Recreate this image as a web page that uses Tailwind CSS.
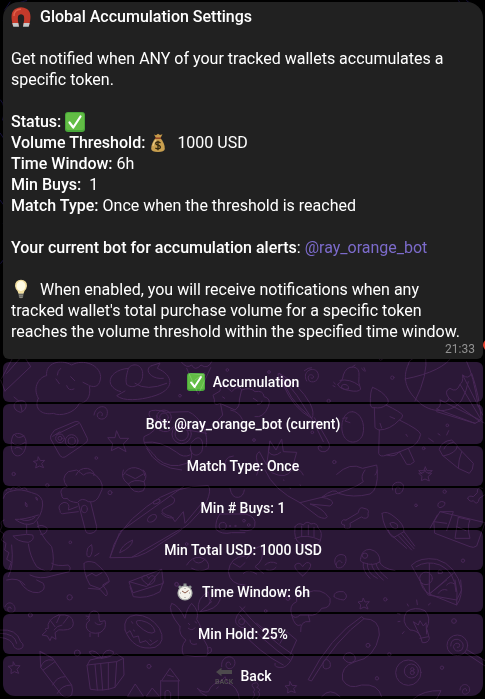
<!DOCTYPE html>
<html lang="en">
<head>
  <meta charset="UTF-8" />
  <meta name="viewport" content="width=device-width, initial-scale=1.0"/>
  <title>Global Accumulation Settings</title>
  <script src="https://cdn.jsdelivr.net/npm/@tailwindcss/browser@4"></script>
</head>
<body class="bg-black font-['Roboto',sans-serif] text-white">
<div class="relative min-h-screen overflow-hidden bg-black pt-[2px] pr-[2px] pb-[3px] pl-[3px]">

  <!-- Chat wallpaper -->
  <svg class="absolute inset-0 h-full w-full" viewBox="0 0 1455 2097" preserveAspectRatio="xMidYMin slice" fill="none" stroke="#1d0f20" stroke-width="3" stroke-linecap="round" stroke-linejoin="round" aria-hidden="true">
    <g stroke="#15103a">
      <path d="M10 60C20 25 45 8 80 2M14 30L30 6M1375 2q25 20 40 45M1400 2l34 26M2 300q18 20 6 60M1 400l20 30M0 600q30 30 10 70M2 790q16-30 22 20M1440 500q10 40 4 80"/>
    </g>

    <!-- cloud, snail, camera, diver -->
    <g transform="translate(0 1065)">
      <path d="M5 70L40 5M15 108L92 35M92 35L75 8M15 108L2 75M20 55L62 8"/>
      <path d="M115 130C95 95 120 65 140 62C135 25 180 10 215 30C250 10 300 30 302 65C300 95 285 98 268 92C275 130 255 145 238 145C225 175 180 185 160 175C125 182 100 160 115 130M168 72l10 14M212 65l12 12M200 92q6 18 22 10M182 40q-10 8-10 20M265 90l-16-8"/>
      <path d="M362 110C310 95 325 45 385 40C400 20 430 30 428 60C428 90 395 105 380 88M455 32L480 24L472 40C520 60 530 105 455 125C420 135 370 140 350 122L375 108M455 32C430 40 450 75 490 70M405 85Q440 110 500 85M385 40C380 60 375 75 380 88"/>
      <path d="M545 22q15 20 30 8q10 20 28 0q20 15 32-10M560 40l35 78L632 38M570 55L616 60M585 75l30-22"/>
      <path d="M42 126l14 12C85 130 85 165 62 172C35 165 38 140 56 138M62 150l4 18"/>
      <path d="M282 180C285 150 325 145 322 175C320 200 288 195 292 178C298 165 312 172 306 182"/>
      <path d="M165 225L225 200Q235 197 240 205L262 250Q265 258 257 264L195 306Q187 310 180 302L152 252Q150 242 155 237ZM170 238L235 206M158 244L180 230"/>
      <circle cx="180" cy="250" r="13"/><circle cx="180" cy="250" r="6"/><circle cx="215" cy="258" r="19"/><circle cx="215" cy="258" r="11"/>
      <path d="M350 228L360 250L386 250L370 267L378 290L355 277L334 287L338 266L323 248L344 248Z"/>
      <path d="M40 240C55 228 82 238 78 270C75 298 58 305 48 302C30 295 30 255 40 240M36 262Q50 280 76 262M45 240Q52 255 72 242M45 280Q54 272 66 283"/>
      <path d="M115 306l6 11 13-1-9 10 6 12-13-5-11 6 3-13-10-7 12-2Z"/>
      <path d="M448 170Q460 160 500 172L565 170Q590 180 610 215Q625 250 618 275M448 170Q440 190 475 200Q470 230 432 245C425 275 460 290 470 310Q510 345 560 325Q585 310 570 280M500 200Q475 200 470 182M520 215Q505 240 478 225"/>
      <circle cx="492" cy="187" r="22"/><circle cx="492" cy="187" r="13"/><circle cx="545" cy="237" r="29"/><circle cx="545" cy="237" r="20"/>
      <path d="M435 262Q480 255 530 292Q550 310 570 300M575 262C600 230 615 260 605 290C590 310 568 300 572 270M560 225L620 235M440 280Q470 340 545 345"/>
      <path d="M640 120L660 108Q660 88 678 95L695 110Q715 88 725 104L718 135Q720 155 705 165L660 145Q640 155 643 135ZM668 126l6 4M662 148L668 180L655 195M692 165q25 5 35 28"/>
      <circle cx="682" cy="45" r="4"/><circle cx="540" cy="122" r="4"/><circle cx="289" cy="309" r="4"/>
      <path d="M228 360q10-22 34-20q22 6 20 22M370 360q12-24 36-22q30 6 28 24M680 345q-15-40 20-42"/>
    </g>

    <!-- bell, umbrella, tree, balloon, flashlight -->
    <g transform="translate(720 1065)">
      <circle cx="87" cy="51" r="4"/><circle cx="266" cy="138" r="5"/><circle cx="457" cy="68" r="5"/><circle cx="622" cy="211" r="4"/><circle cx="551" cy="280" r="4"/><circle cx="283" cy="321" r="5"/><circle cx="42" cy="255" r="4"/><circle cx="422" cy="12" r="4"/><circle cx="217" cy="232" r="4"/>
      <path d="M200 78C185 50 215 35 230 48C245 68 225 88 208 78C198 62 212 54 220 63C222 69 217 72 213 69M193 47q12-10 22-9"/>
      <path d="M293 88Q308 80 310 60Q318 35 340 36Q360 38 357 65Q353 82 362 102Q357 113 325 106Q298 102 293 88M300 76Q330 70 358 92M338 35L345 30M325 102q-10 4-20-3q-2-14 13-10q10 4 7 13M365 40l8 8M372 38l4 10M281 82l5 5M279 92l6 3"/>
      <path d="M118 55Q105 50 130 90Q160 160 215 190Q225 175 210 145Q180 90 118 55M118 55Q175 120 215 190M125 62Q145 135 205 180M215 190L250 260M223 188L262 255Q278 280 255 290Q235 292 234 275Q240 268 246 277"/>
      <path d="M5 105Q30 95 45 110Q70 105 72 125Q95 130 85 155Q70 190 45 185M40 130l12 8M52 148q14 0 14-10"/>
      <path d="M398 97Q390 105 391 150Q395 162 403 158L405 218Q415 226 418 225L416 295Q420 308 440 300Q465 308 478 290L500 328Q512 332 523 320L505 280Q535 270 542 238Q540 225 478 195Q488 190 488 180Q480 170 438 150Q448 145 443 132Q430 110 398 97M403 158Q425 162 438 150M418 225Q450 225 478 195M440 300Q475 295 505 280M420 205l5 14M450 185l14 6M498 238l4 6"/>
      <path d="M338 170C310 168 300 210 308 235C318 268 355 270 368 240C378 205 360 172 338 170M308 190l14-2-7 10 15 5"/>
      <path d="M505 28C485 70 500 105 530 135C570 180 640 175 665 135Q680 108 685 80M557 0Q565 60 525 138M495 72Q610 50 640 0M680 20Q700 60 715 155M530 5Q505 15 505 28"/>
      <path d="M590 162Q605 155 600 135Q620 150 627 130Q610 108 630 100Q650 115 660 88Q670 82 668 60Q685 75 695 55Q718 120 724 195L705 205L590 162M600 135L720 195M627 130L720 200M660 88L724 195M668 60L728 180M590 170L705 205M725 200l8 4"/>
      <path d="M50 360L58 335Q40 300 58 290L80 330L90 258L108 285L125 252L130 290L170 292L158 335Q180 340 190 360M90 258L85 290Q100 310 122 292"/>
      <path d="M598 282Q605 258 635 255L652 272Q650 295 610 303ZM612 282q5-16 28-20M610 303L655 340M652 275L700 325Q700 345 688 355L655 340Q655 315 665 290M600 240l-6-4M620 240l6-13M580 260l-14-10"/>
      <path d="M290 358Q330 320 368 340L410 330Q415 350 405 360M556 336l5 11h16l-12 9M556 336l-5 11h-15l10 10"/>
    </g>

    <!-- dinosaur, broccoli, surfboard -->
    <g transform="translate(0 1410)">
      <circle cx="142" cy="46" r="5"/><circle cx="330" cy="68" r="6"/><circle cx="41" cy="12" r="5"/><circle cx="211" cy="217" r="4"/><circle cx="560" cy="222" r="4"/>
      <path d="M10 85Q15 65 40 62Q60 55 95 68Q130 75 128 105Q125 140 100 160Q75 170 45 148Q70 150 115 135M62 148Q85 158 105 142M76 97q8 4 5 14q-8-2-5-14M108 82q7 2 4 9q-6-2-4-9M18 62q4-12 14-2q6-14 16-4q8-12 17 0q12-8 16 4M80 165V190M112 155Q115 190 155 230Q165 270 155 300Q140 310 110 290Q90 260 85 222M112 170Q125 160 142 175Q140 195 122 193M40 198Q50 215 85 217Q105 210 98 195L80 193Q62 195 40 198M155 280Q170 290 205 285Q215 292 208 305L155 318Q120 330 90 315"/>
      <path d="M12 150q-14 4-6 18l-6 15 12 9-8 18 14 10-4 20 13 8-7 20 14 8-8 22M35 225Q42 290 25 320M20 330Q55 320 75 345"/>
      <path d="M185 75Q175 55 202 50Q180 25 205 5L230 0Q245 10 250 15Q270 0 290 18Q318 45 300 72Q290 100 265 95Q245 80 232 98Q205 95 202 85Q185 90 185 75M235 100L256 180Q258 192 273 190Q292 186 290 170L272 97M232 110L205 120Q212 98 192 97Q170 105 180 122Q180 135 195 130L235 125"/>
      <ellipse cx="253" cy="117" rx="9" ry="11"/>
      <path d="M330 262Q345 180 440 110Q520 45 625 47Q635 60 620 95Q580 165 490 215Q430 260 395 262ZM358 190L330 262M395 262L545 175M360 185L550 50M515 80Q530 85 520 100L488 118Q478 130 515 140L525 155L550 125L555 160L605 100M485 130q10 15 35 14M360 245q5-20 38-35q0 20-38 38Z"/>
      <ellipse cx="470" cy="95" rx="11" ry="5" transform="rotate(-25 470 95)"/><ellipse cx="456" cy="145" rx="15" ry="9" transform="rotate(-35 456 145)"/>
      <path d="M370 0Q360 25 385 42Q400 75 430 62Q440 50 432 35Q445 15 430 0M385 42Q400 25 432 35M378 12l28 14 24-14"/>
      <path d="M690 55Q695 85 715 82Q730 80 733 60M660 132Q645 150 648 178Q665 195 695 188H735M660 132H735"/><circle cx="668" cy="168" r="11"/><circle cx="690" cy="168" r="2"/><circle cx="706" cy="168" r="2"/>
      <path d="M263 235Q255 265 270 260Q280 245 275 225ZM284 258l13-8M252 280Q260 270 285 278Q325 310 328 335L300 356L270 345Q250 310 252 280M258 320l18-10 12 8 18-10"/>
      <path d="M388 335L485 298L490 340L400 368ZM388 335L440 350L485 298M445 345Q415 325 430 318Q442 312 446 326Q455 310 465 322Q467 340 445 345"/>
      <path d="M560 285Q575 260 600 262Q630 270 625 295Q600 310 575 295M580 270q15 20 35-2M735 258Q690 260 685 305Q690 345 735 345M700 280l20 12 15-14"/>
      <circle cx="530" cy="343" r="6"/>
    </g>

    <!-- whale, bone, rocket, jellyfish, pizza -->
    <g transform="translate(720 1410)">
      <circle cx="614" cy="65" r="5"/><circle cx="528" cy="106" r="4"/><circle cx="669" cy="272" r="5"/>
      <path d="M75 0Q100 60 180 98L235 140Q258 150 262 140Q250 115 210 102L270 108Q290 95 260 85L245 82Q340 60 370 35Q360 20 375 0M245 82Q285 50 295 70Q340 85 390 72Q415 60 412 0M180 98L245 82M95 8Q140 30 155 0M130 30l2 1M150 55l2 1M180 45l2 1"/>
      <path d="M555 0l4 8 16 2-11 10 4 13-13-6-11 5 2-13-10-9 14-2Z"/>
      <path d="M458 60C450 38 480 28 490 45C492 65 480 75 468 70C462 52 475 46 480 55"/>
      <path d="M318 150L355 128Q358 108 372 115Q390 118 384 130Q388 148 370 144Q365 138 360 143L330 160Q335 178 320 176Q310 175 314 165Q302 165 305 154Q310 146 318 150"/>
      <path d="M165 170Q175 155 190 165Q200 150 213 162Q230 155 235 175Q250 185 240 215Q225 235 180 220Q160 210 165 170M185 168V200M205 165V195M222 172V200M165 205Q200 190 240 210"/>
      <path d="M426 130Q440 120 465 142Q492 162 492 185L462 202Q430 180 426 130M450 160q8-8 22 4q4 14-8 12q-12-4-14-16M462 202L500 235M475 197L515 240M492 185L524 228M485 193L522 236M445 180q5 22 18 22"/>
      <path d="M595 100q8-10 20-2q0 12-15 15q-10-2-5-13M582 155L600 125L735 158L710 228Q700 235 690 230L585 190ZM570 175L592 135M600 125L640 125L620 182M582 155L620 160M655 142L690 150Q680 170 690 205L645 205Q650 170 655 142M650 170l28 12"/>
      <path d="M683 85Q685 75 700 80L712 68Q710 48 728 55M683 85Q690 98 700 92Q712 110 718 85L733 75"/>
      <path d="M362 265Q365 238 390 238Q420 245 420 275Q400 290 370 278Q358 275 362 265M370 278Q365 300 390 325M382 280Q380 310 412 325M395 282Q395 300 430 330M408 280Q410 300 442 325M418 275Q425 295 465 302"/><circle cx="375" cy="257" r="8"/>
      <path d="M287 285C275 262 300 245 316 258C325 280 305 300 290 292C285 275 300 265 306 278"/>
      <path d="M188 318Q160 295 165 285Q178 272 188 290Q200 270 212 282Q215 295 188 318M20 265Q60 215 65 235Q75 270 45 290L70 310M75 285Q90 270 110 280M80 300Q98 305 108 292M10 310Q25 295 50 312"/>
      <path d="M515 285Q540 260 590 268Q650 285 665 360L650 390L565 375ZM528 290Q560 270 600 285Q645 305 648 365M568 280V372M568 372L640 310"/><circle cx="558" cy="325" r="19"/><path d="M595 310q-4-14 10-8q10 10-10 8M620 345q10-12 22-4"/>
      <path d="M0 180Q50 190 45 155Q40 132 0 130"/><circle cx="12" cy="152" r="4"/><circle cx="26" cy="165" r="4"/>
    </g>

    <!-- rainbow, shrimp, chick, donut, bunny, pencil, gift -->
    <g transform="translate(0 1740)">
      <circle cx="209" cy="52" r="8"/><circle cx="91" cy="105" r="6"/><circle cx="232" cy="219" r="9"/><circle cx="447" cy="259" r="6"/><circle cx="530" cy="13" r="5"/>
      <path d="M60 5Q80 40 115 38Q140 30 130 10L110 0M265 25L300 28L318 48Q325 45 320 32L308 15L325 5M390 20L400 50Q440 58 480 35L490 5"/>
      <path d="M15 80C25 55 50 75 44 92C35 105 18 95 25 82Q32 78 34 86"/>
      <path d="M0 150Q50 145 62 185Q75 195 65 205Q50 212 42 200Q35 175 0 172M0 160Q45 160 50 190"/>
      <path d="M175 105Q220 100 220 130Q220 150 190 150Q175 145 165 158L168 178L155 170L150 182L142 168L126 165L140 152Q130 145 145 145Q138 120 175 105M180 106L170 128M150 120L165 140M205 110L190 130M162 150q10-14 24-15"/>
      <path d="M268 122Q262 98 280 93Q300 92 297 115L300 125L315 122Q322 145 300 158Q270 165 260 145Q255 130 268 122M258 108l10 2-8 8M270 160v10M295 160v10M285 128q12 12 22 2"/>
      <path d="M375 150Q368 108 408 105Q450 105 478 145Q500 185 465 202Q400 215 375 150M413 135Q400 118 425 122Q460 130 465 155Q450 170 413 135M380 160l10-8 10 20 15-4 5 20 18-6 12 14 22-14M395 125l3 5M450 180l5 4M400 150l4 3"/>
      <path d="M540 140Q500 90 515 70Q535 75 555 115Q560 85 575 70Q600 95 590 118Q610 145 598 165Q635 200 620 228Q585 232 550 225Q540 200 558 180Q535 165 540 140M565 130l4 4M585 125l5 4M565 145q12 10 20-2M570 180q0 18 20 12M622 205q14-10 12 10l-12 8"/>
      <path d="M595 90Q590 55 625 35L628 60M600 95Q650 90 660 60Q665 30 650 25L625 75M600 95L635 65M735 80Q700 110 708 130Q725 150 735 140"/>
      <path d="M120 215L122 262L185 345Q200 358 215 345Q220 330 215 315L158 235Z M120 215L158 235M122 262Q130 235 158 240M130 270L165 245M158 315Q170 290 195 290M172 340Q185 315 212 315"/>
      <path d="M262 255L350 245L345 322Q310 335 272 328ZM262 255L270 240L350 222L370 235L350 245M370 235L372 285L345 322M285 253L292 330M302 250L308 330M325 248L325 328M305 235Q270 230 268 215Q285 205 305 235Q315 200 340 215Q345 230 305 235"/>
      <path d="M40 246l6 11 14 0-9 11 5 12-13-5-10 6 1-14-10-8 14-2Z"/>
      <path d="M485 302L510 265L538 302ZM482 302V357M535 302V357M502 285L520 290M405 313L382 350H430ZM456 325L438 350H478ZM495 357V335Q505 325 512 340V357"/>
      <path d="M592 325Q610 340 625 335Q635 310 665 302L675 290L682 308Q715 320 718 357M592 325Q605 345 620 348M650 325l5-4"/>
      <path d="M665 260C660 225 705 220 705 250C700 275 670 268 680 248Q690 242 692 254"/>
    </g>

    <!-- ship, fishing rod, bulb, 8-ball, lollipop -->
    <g transform="translate(720 1740)">
      <circle cx="77" cy="93" r="4"/><circle cx="144" cy="55" r="6"/><circle cx="436" cy="58" r="5"/><circle cx="642" cy="123" r="7"/><circle cx="384" cy="196" r="6"/><circle cx="448" cy="223" r="5"/><circle cx="411" cy="295" r="5"/><circle cx="606" cy="263" r="5"/>
      <path d="M155 105Q145 75 170 65Q165 35 200 38Q245 20 270 55Q275 85 245 85Q230 110 205 105L210 125Q180 120 182 155M155 105Q165 120 180 105L205 105M155 105Q165 145 182 135"/>
      <path d="M0 80Q70 165 160 225M0 105Q70 185 150 240M0 150Q60 220 130 255M120 190L140 155L170 180L150 225M160 225Q150 255 130 262Q100 265 105 250M50 130Q80 155 115 180"/>
      <circle cx="5" cy="125" r="9"/>
      <path d="M282 50Q280 32 310 35Q328 48 312 60Q290 58 282 50M370 55l5 11 13-1-9 10 5 12-12-6-12 6 2-13-8-8 12-2Z"/>
      <path d="M205 298Q270 170 365 110L372 116Q290 175 215 302ZM372 116Q420 115 418 165Q405 235 345 245Q300 260 308 300Q325 330 365 315Q415 310 425 350M310 235Q312 218 330 218Q350 225 345 242Q325 258 310 235M250 262Q245 240 260 238Q275 245 270 262Q255 272 250 262"/>
      <path d="M540 165Q530 150 510 150Q480 125 500 95Q525 78 555 92Q575 115 560 145L568 175Q565 190 548 188ZM540 168L520 125L535 135L540 122L550 138L558 128L560 162M540 175L565 170M502 72l3 6M530 60l2 14M565 75l6-5M472 100l8 2M474 125l6-1M492 155l-5 6"/>
      <circle cx="505" cy="278" r="38"/><circle cx="514" cy="273" r="21"/><circle cx="517" cy="268" r="5"/><circle cx="517" cy="278" r="6"/>
      <circle cx="652" cy="196" r="31"/><path d="M632 198Q632 175 655 178Q678 190 665 210Q645 220 640 200Q645 185 658 192Q662 202 652 202M675 218L735 258M682 210L735 242"/>
      <path d="M660 330C660 305 695 310 688 335C675 350 662 340 670 328Q680 322 680 332"/>
      <path d="M150 305l6 11 14 1-9 9 5 12-13-5-10 6 1-13-9-8 13-2ZM38 320Q30 310 50 308Q60 318 50 322Q65 328 55 335Q65 345 50 357M38 320Q48 330 40 335Q48 345 38 355M245 350Q270 320 300 350M520 357Q550 330 603 332L590 357"/>
      <path d="M540 0Q545 30 568 42L650 75Q670 50 662 0M568 42V0M568 42L620 0M650 75Q655 40 645 0M595 40q10-16 26-10"/>
    </g>
  </svg>

  <!-- Message bubble -->
  <main class="relative rounded-t-2xl rounded-b-md bg-[#212121] px-2 pt-1 pb-[17px] text-base leading-[21px]">
    <h1 class="flex items-center font-medium">
      <svg class="mr-[9px] size-5" viewBox="0 0 20 20" aria-hidden="true">
        <path d="M2 19C0 12-.5 5 4 2Q10-1.5 16 2C20.500 5 20 12 18 19L12 19C13 15 14 9 12 8Q10 6.500 8 8C6 9 7 15 8 19Z" fill="#c43a2b"/>
        <path d="M3 9C2.500 5 6 2 10 2.200" fill="none" stroke="#e2614b" stroke-width="1.500"/>
        <path d="M1.300 16H7.300L8 19.800H2.300ZM12.700 16H18.700L17.700 19.800H12Z" fill="#c3c7c9"/>
      </svg>
      Global Accumulation Settings
    </h1>

    <p class="mt-[21px]">Get notified when ANY of your tracked wallets accumulates a specific token.</p>

    <div class="mt-[21px]">
      <p class="flex items-center"><b class="font-medium">Status:</b>
        <svg class="ml-1 size-5" viewBox="0 0 20 20" role="img" aria-label="enabled">
          <rect width="20" height="20" rx="3" fill="#49a83a"/><rect x="1" y="1" width="18" height="17" rx="2" fill="#62bd45"/>
          <path d="M4.500 10.500L8.300 15.500L15.500 4.500" fill="none" stroke="#fff" stroke-width="2.200" stroke-linecap="round" stroke-linejoin="round"/>
        </svg>
      </p>
      <p class="flex items-center"><b class="font-medium">Volume Threshold:</b>
        <svg class="mr-[9px] ml-[3px] size-5" viewBox="0 0 20 20" aria-hidden="true">
          <path d="M6 1.500L8 2.200L10 .8L12 2L14.500 1.200L12.500 5H8Z" fill="#c79a4a"/>
          <path d="M7.500 5H12.500C15 8 17 12 16.800 16Q16.500 19 10 19Q3.500 19 3.200 16C3 12 5 8 7.500 5Z" fill="#c9a04f"/>
          <path d="M5 13Q5.500 9 8 7" fill="none" stroke="#e6c987" stroke-width="1.200"/>
          <path d="M7 5.200H13" stroke="#8d3b22" stroke-width="1.400"/>
          <path d="M12.500 10Q10 8 8 9.600Q7 11.500 10 12.200Q13.200 13 12.200 15Q10 16.700 7.300 15M10 7.700V17.300" fill="none" stroke="#33280f" stroke-width="1.300"/>
        </svg>
        1000 USD
      </p>
      <p><b class="font-medium">Time Window:</b> 6h</p>
      <p><b class="font-medium">Min Buys:</b> &nbsp;1</p>
      <p><b class="font-medium">Match Type:</b> Once when the threshold is reached</p>
    </div>

    <p class="mt-[21px]"><b class="font-medium">Your current bot for accumulation alerts</b>: <a href="#" class="text-[#7c6bcb] hover:underline">@ray_orange_bot</a></p>

    <p class="mt-[21px]">
      <svg class="mr-[5px] inline size-5 align-[-4px]" viewBox="0 0 20 20" aria-hidden="true">
        <path d="M7.500 14H12.500L12 18.500Q10 20 8 18.500Z" fill="#8b8a82"/>
        <path d="M7.800 15.500H12.200M8 17.300H12" stroke="#55544f" stroke-width=".7"/>
        <path d="M10 .8Q16 1 16 7Q15.800 9.500 13.500 12L12.600 14.500H7.400L6.500 12Q4.200 9.500 4 7Q4 1 10 .8Z" fill="#f2dfa0"/>
        <ellipse cx="10" cy="7" rx="4.400" ry="5" fill="#fffbe4"/>
      </svg>
      When enabled, you will receive notifications when any tracked wallet's total purchase volume for a specific token reaches the volume threshold within the specified time window.
    </p>
    <time class="absolute right-2 bottom-0 text-xs leading-5 text-[#929292]">21:33</time>
    <!-- edge of the reaction button next to the bubble -->
    <span class="absolute -right-3 bottom-2 h-3 w-3 rounded-full bg-[#e8432e]"></span>
  </main>

  <!-- Inline keyboard -->
  <div class="mt-[3px] grid auto-rows-[40px] gap-[2px] text-sm font-medium mix-blend-plus-lighter">
    <button class="flex items-center justify-center gap-2 rounded-md bg-[#2b1837] hover:bg-[#362045]">
      <svg class="size-[18px]" viewBox="0 0 20 20" aria-hidden="true">
        <rect width="20" height="20" rx="3" fill="#49a83a"/><rect x="1" y="1" width="18" height="17" rx="2" fill="#62bd45"/>
        <path d="M4.500 10.500L8.300 15.500L15.500 4.500" fill="none" stroke="#fff" stroke-width="2.200" stroke-linecap="round" stroke-linejoin="round"/>
      </svg>
      Accumulation
    </button>
    <button class="rounded-md bg-[#2b1837] hover:bg-[#362045]">Bot: @ray_orange_bot (current)</button>
    <button class="rounded-md bg-[#2b1837] hover:bg-[#362045]">Match Type: Once</button>
    <button class="rounded-md bg-[#2b1837] hover:bg-[#362045]">Min # Buys: 1</button>
    <button class="rounded-md bg-[#2b1837] hover:bg-[#362045]">Min Total USD: 1000 USD</button>
    <button class="flex items-center justify-center gap-2 rounded-md bg-[#2b1837] hover:bg-[#362045]">
      <svg class="size-[18px]" viewBox="0 0 18 18" aria-hidden="true">
        <path d="M7.500 .5H10.500V3H7.500ZM2 4L4 2.200L5.500 3.800L3.500 5.500ZM16 4L14 2.200L12.500 3.800L14.500 5.500Z" fill="#8f9695"/>
        <circle cx="9" cy="10" r="7.600" fill="#a9adaa"/>
        <circle cx="9" cy="10" r="6.300" fill="#f3f1ea"/>
        <path d="M9 5v1M9 14v1M4 10h1M13 10h1" stroke="#777" stroke-width=".8"/>
        <path d="M6 8L9 10L12.500 7.500" fill="none" stroke="#8b5a49" stroke-width="1"/>
      </svg>
      Time Window: 6h
    </button>
    <button class="rounded-md bg-[#2b1837] hover:bg-[#362045]">Min Hold: 25%</button>
    <button class="flex items-center justify-center gap-2 rounded-t-md rounded-b-xl bg-[#2b1837] hover:bg-[#362045]">
      <svg class="size-[18px]" viewBox="0 0 18 18" aria-hidden="true">
        <path d="M1 5L6.500 .8V3H17V7H6.500V9.200Z" fill="#4d4a4d"/>
        <text x="9" y="16.500" text-anchor="middle" font-family="Roboto, sans-serif" font-size="7" font-weight="700" fill="#4d4a4d">BACK</text>
      </svg>
      Back
    </button>
  </div>

</div>
</body>
</html>
